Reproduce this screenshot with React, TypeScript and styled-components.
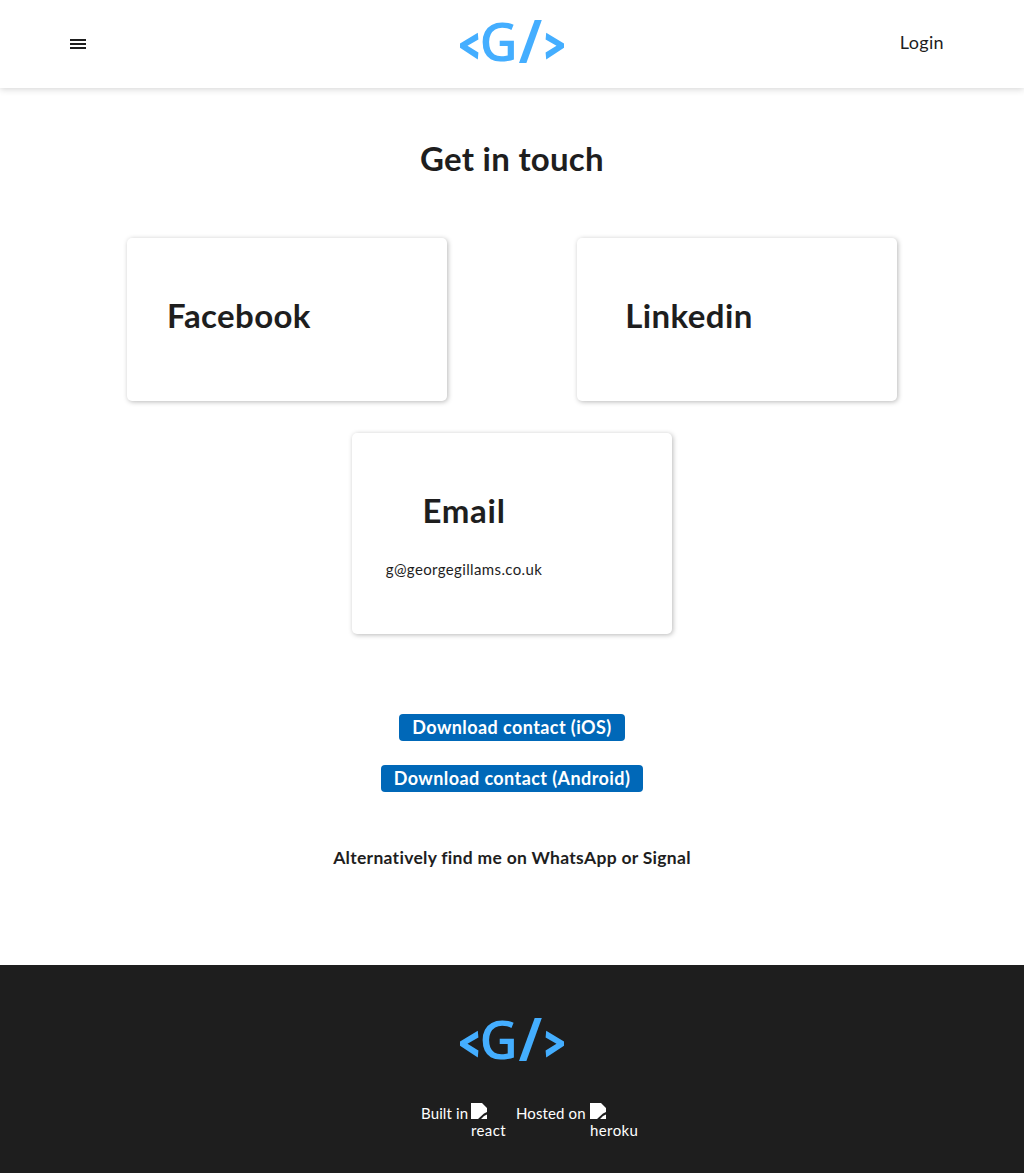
import React from "react";
import styled, { createGlobalStyle } from "styled-components";

const Global = createGlobalStyle`
  *, *::before, *::after { box-sizing: border-box; }
  body { margin: 0; background: #fff; color: #1e1e1e; font-family: Lato, "Open Sans", sans-serif; }
  h1, h2, p { margin: 0; }
  a { color: inherit; text-decoration: none; }
`;

const Page = styled.div`
  display: flex;
  flex-direction: column;
  min-height: 1173px;
`;

const Header = styled.header`
  display: grid;
  grid-template-columns: 1fr auto 1fr;
  align-items: center;
  height: 88px;
  padding: 0 70px;
  background: #fff;
  box-shadow: 0 1px 7px rgba(0, 0, 0, 0.18);
`;

const MenuButton = styled.button`
  display: flex;
  flex-direction: column;
  gap: 2px;
  width: 16px;
  padding: 0;
  border: 0;
  background: none;
`;

const MenuBar = styled.span`
  height: 2px;
  background: #1e1e1e;
`;

const LogoSvg = styled.svg`
  display: block;
  width: 104px;
  height: 44px;
  overflow: visible;
  fill: #44aeff;
  font-family: "Open Sans", sans-serif;
  font-size: 53px;
  font-weight: 600;
`;

const LogoSlot = styled.div`
  padding-bottom: 4px;
`;

const Login = styled.a`
  justify-self: end;
  margin: 0 10px 4px 0;
  font-size: 18px;
  line-height: 24px;
  letter-spacing: 0.35px;
`;

const Main = styled.main`
  display: flex;
  flex-direction: column;
  align-items: center;
  height: 877px;
`;

const Title = styled.h1`
  margin-top: 49px;
  font-size: 33px;
  line-height: 42px;
  letter-spacing: 0.25px;
`;

const Cards = styled.div`
  display: flex;
  flex-wrap: wrap;
  justify-content: space-around;
  row-gap: 32px;
  width: 900px;
  margin-top: 59px;
`;

const Card = styled.a<{ $height: number }>`
  display: flex;
  flex-direction: column;
  align-items: center;
  width: 320px;
  height: ${(p) => p.$height}px;
  padding: 56px 96px 0 0;
  border-radius: 5px;
  background: #fff;
  box-shadow: 1px 1px 5px rgba(0, 0, 0, 0.28);
`;

const CardTitle = styled.h2<{ $spacing: number }>`
  font-size: 33px;
  line-height: 42px;
  letter-spacing: ${(p) => p.$spacing}px;
`;

const CardText = styled.p`
  margin-top: 27px;
  font-size: 15px;
  line-height: 22px;
  letter-spacing: 0.37px;
  white-space: nowrap;
`;

const Downloads = styled.div`
  display: flex;
  flex-direction: column;
  align-items: center;
  gap: 24px;
  margin-top: 80px;
`;

const Download = styled.a<{ $width: number }>`
  width: ${(p) => p.$width}px;
  height: 27px;
  border-radius: 4px;
  background: #0068b8;
  color: #fff;
  font-size: 18px;
  font-weight: 700;
  line-height: 26px;
  letter-spacing: 0.42px;
  text-align: center;
  white-space: nowrap;
`;

const Alternative = styled.p`
  margin-top: 54px;
  font-size: 17.5px;
  font-weight: 700;
  line-height: 24px;
  letter-spacing: 0.29px;
`;

const Footer = styled.footer`
  display: flex;
  flex-direction: column;
  align-items: center;
  height: 208px;
  padding-top: 53px;
  background: #1e1e1e;
  color: #fff;
`;

const Credits = styled.div`
  display: flex;
  gap: 9px;
  margin: 41px 0 0 34px;
  font-size: 15px;
  line-height: 20px;
`;

const Credit = styled.div<{ $width: number; $label: number }>`
  display: grid;
  grid-template-columns: ${(p) => p.$label}px auto;
  width: ${(p) => p.$width}px;
  letter-spacing: 0.12px;
  white-space: nowrap;
`;

const Missing = styled.div`
  display: flex;
  flex-direction: column;
`;

const MissingIcon = styled.svg`
  display: block;
  width: 16px;
  height: 16px;
`;

const Alt = styled.span`
  margin-top: 1px;
  letter-spacing: 0.4px;
`;

function Logo() {
  return (
    <LogoSvg viewBox="0 0 104 44" role="img">
      <polygon points="0,23.5 17.8,12.7 18.4,19.5 7.5,25.8 18.4,32.4 17.8,39.5 0,27.8" />
      <text x="19.5" y="40.5">G</text>
      <polygon points="74.7,0 81.8,0 66.4,43 59,43" />
      <polygon points="104,23.5 86.2,12.7 85.6,19.5 96.5,25.8 85.6,32.4 86.2,39.5 104,27.8" />
    </LogoSvg>
  );
}

function MissingImage({ alt }: { alt: string }) {
  return (
    <Missing>
      <MissingIcon viewBox="0 0 16 16">
        <path d="M0 0H11L16 5V9L13 10.5L7 16H0Z M16 11.5V16H10L13 13Z" fill="#fff" />
      </MissingIcon>
      <Alt>{alt}</Alt>
    </Missing>
  );
}

export default function App() {
  return (
    <>
      <Global />
      <Page>
        <Header>
          <MenuButton aria-label="Menu"><MenuBar /><MenuBar /><MenuBar /></MenuButton>
          <LogoSlot><Logo /></LogoSlot>
          <Login href="#">Login</Login>
        </Header>
        <Main>
          <Title>Get in touch</Title>
          <Cards>
            <Card href="#" $height={163}><CardTitle $spacing={0.38}>Facebook</CardTitle></Card>
            <Card href="#" $height={163}><CardTitle $spacing={0.4}>Linkedin</CardTitle></Card>
            <Card href="#" $height={201}>
              <CardTitle $spacing={0.7}>Email</CardTitle>
              <CardText>g@georgegillams.co.uk</CardText>
            </Card>
          </Cards>
          <Downloads>
            <Download href="#" $width={226}>Download contact (iOS)</Download>
            <Download href="#" $width={262}>Download contact (Android)</Download>
          </Downloads>
          <Alternative>Alternatively find me on WhatsApp or Signal</Alternative>
        </Main>
        <Footer>
          <Logo />
          <Credits>
            <Credit $width={86} $label={50}><span>Built in</span><MissingImage alt="react" /></Credit>
            <Credit $width={121} $label={74}><span>Hosted on</span><MissingImage alt="heroku" /></Credit>
          </Credits>
        </Footer>
      </Page>
    </>
  );
}
